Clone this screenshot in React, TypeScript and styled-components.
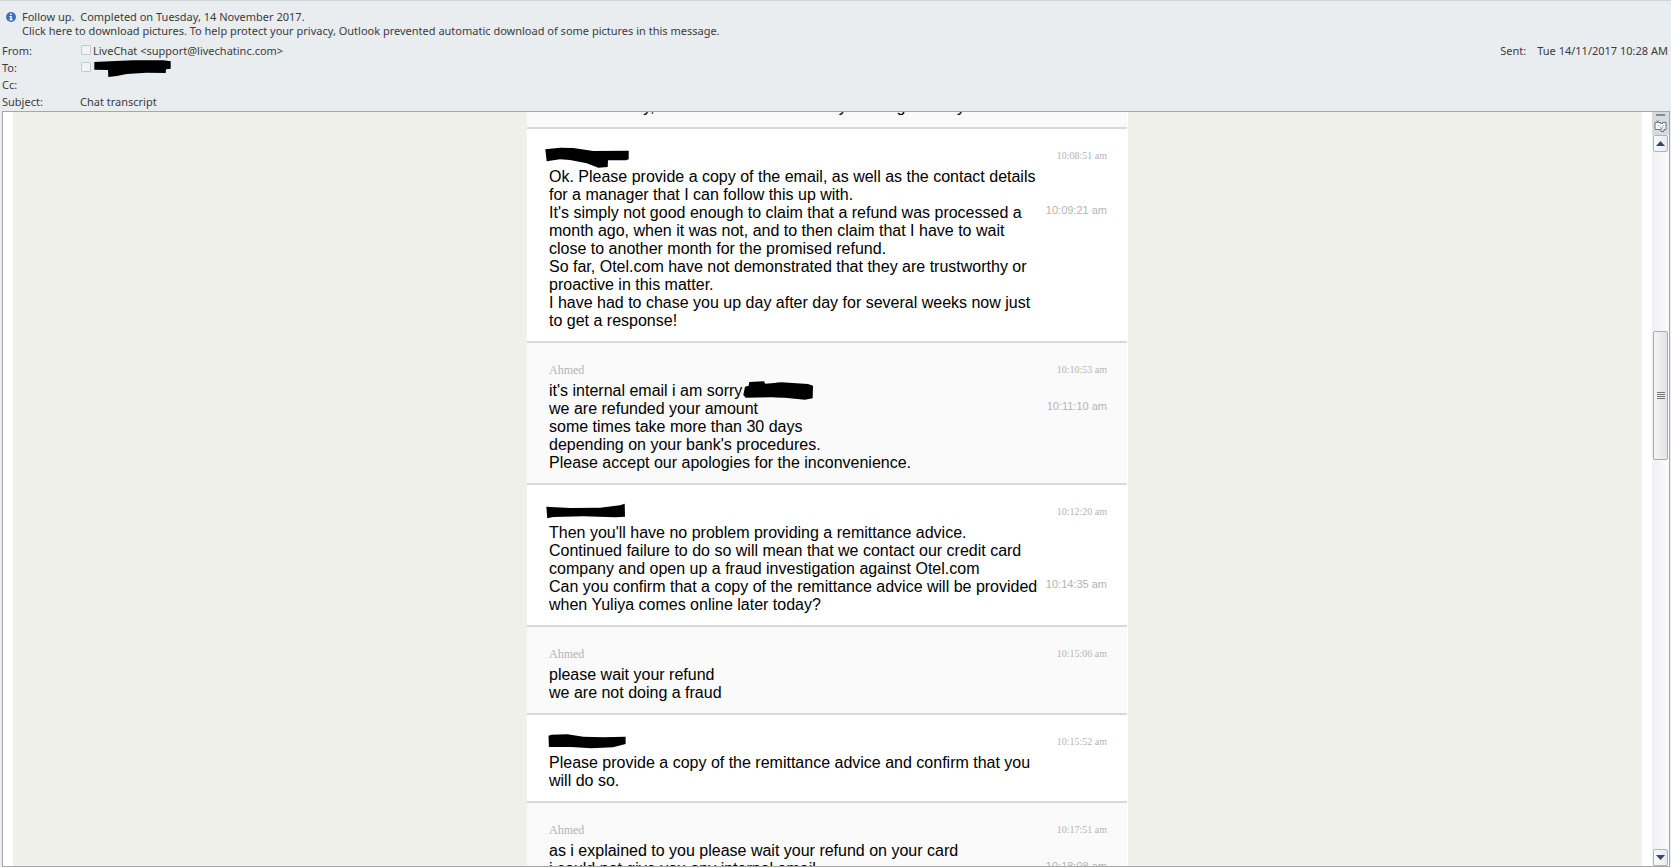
import React, { useLayoutEffect, useRef } from "react";
import styled, { createGlobalStyle } from "styled-components";

const GlobalStyle = createGlobalStyle`
  * { box-sizing: border-box; }
  body { margin: 0; background: #e9edf0; }
`;

const Window = styled.div`
  display: flex;
  flex-direction: column;
  height: 100vh;
  padding: 0 1px 0 2px;
  border-top: 1px solid #cfd4d8;
  background: #e9edf0;
  color: #3b3b3b;
  font: 11px/17px "Noto Sans", "Open Sans", sans-serif;
`;

const InfoBar = styled.div`
  display: flex;
  gap: 6px;
  padding: 9px 4px 4px;
  line-height: 14px;
`;

const InfoIcon = styled.svg`
  flex: none;
  width: 10px;
  height: 14px;
`;

const InfoLines = styled.div`
  display: flex;
  flex-direction: column;
  align-items: flex-start;
  white-space: pre;
`;

const InfoAction = styled.button`
  padding: 0;
  border: 0;
  background: none;
  color: inherit;
  font: inherit;
  cursor: pointer;
`;

const Envelope = styled.div`
  display: flex;
  align-items: flex-start;
  justify-content: space-between;
  padding-bottom: 1px;
`;

const Fields = styled.dl`
  display: grid;
  grid-template-columns: 78px auto;
  grid-auto-rows: 17px;
  margin: 0;
`;

const SentField = styled.dl`
  display: flex;
  gap: 11px;
  margin: 0;
  padding-right: 2px;
`;

const Label = styled.dt``;

const Value = styled.dd`
  display: flex;
  align-items: center;
  gap: 2px;
  margin: 0;
`;

const Presence = styled.input`
  appearance: none;
  width: 10px;
  height: 10px;
  margin: 0 0 2px 1px;
  border: 1px solid #c6c9cc;
  border-radius: 1px;
  background: #f1f2f3;
`;

const Pane = styled.main`
  display: flex;
  flex: 1;
  min-height: 0;
  border: 1px solid #a3a8ac;
  background: #fff;
`;

const Viewport = styled.div`
  flex: 1;
  margin: 0 10px;
  overflow-y: auto;
  scrollbar-width: none;
  background: #eff0ea;
`;

const Transcript = styled.div`
  width: 601px;
  max-width: 100%;
  margin: 0 auto;
  padding-right: 1px;
  background: #fff;
`;

const Turn = styled.section<{ $agent?: boolean }>`
  padding: 19px 20px 11px 22px;
  border-bottom: 2px solid #d9d9d9;
  background: ${(p) => (p.$agent ? "#fafafa" : "#fff")};
`;

const TurnHeader = styled.header`
  display: flex;
  justify-content: space-between;
  margin-bottom: 4px;
  color: #b4b4b4;
  font: 12px/16px "Liberation Serif", "Times New Roman", serif;
`;

const Author = styled.span`
  position: relative;
`;

const HeaderTime = styled.time`
  font-size: 10px;
`;

const Message = styled.div`
  display: flex;
  justify-content: space-between;
`;

const MessageText = styled.p`
  position: relative;
  width: 496px;
  margin: 0;
  color: #000;
  font: 16px/18px "Liberation Sans", Arial, sans-serif;
`;

const MessageTime = styled.time`
  color: #b4b4b4;
  font: 11px/12px "Liberation Sans", Arial, sans-serif;
  white-space: nowrap;
`;

const AuthorMark = styled.svg`
  position: absolute;
  top: -2px;
  left: -4px;
  width: 86px;
  height: 22px;
`;

const InlineMark = styled.svg`
  position: absolute;
  top: -1px;
  width: 72px;
  height: 20px;
`;

const RecipientMark = styled.svg`
  width: 78px;
  height: 18px;
`;

const ScrollBar = styled.div`
  display: flex;
  flex: none;
  flex-direction: column;
  width: 17px;
  padding: 0 1px;
  background: linear-gradient(90deg, #f0f0f3, #fbfbfc);
`;

const ScrollTools = styled.div`
  display: flex;
  flex: none;
  flex-direction: column;
  align-items: center;
  gap: 4px;
  height: 23px;
  margin: 0 -1px;
  padding-top: 2px;
  background: #d6dbdf;
`;

const SplitHandle = styled.span`
  width: 9px;
  height: 2px;
  background: #858a8d;
`;

const ToolButton = styled.button`
  display: flex;
  padding: 0;
  border: 0;
  background: none;
`;

const ArrowButton = styled.button`
  display: flex;
  flex: none;
  align-items: center;
  justify-content: center;
  height: 17px;
  padding: 0;
  border: 1px solid #b0b4bb;
  border-radius: 2px;
  background: linear-gradient(90deg, #fafafa, #e9eaec);
`;

const Track = styled.div<{ $share: number }>`
  flex: ${(p) => p.$share};
`;

const Thumb = styled.div`
  display: flex;
  flex: 127;
  flex-direction: column;
  align-items: center;
  justify-content: center;
  gap: 1px;
  border: 1px solid #a9abb0;
  border-radius: 2px;
  background: linear-gradient(90deg, #f5f5f5, #e2e3e5);
`;

const Grip = styled.span`
  width: 8px;
  height: 1px;
  background: #777;
`;

type Msg = { text: React.ReactNode; time?: string };
type TurnData = { author?: string; mark?: string; time?: string; messages: Msg[] };

const turns: TurnData[] = [
  {
    author: "Ahmed",
    messages: [{ text: "and I am sorry, as I also understand that you are genuinely" }],
  },
  {
    mark: "M.3 3.3 15 1.7 28.3 2 48.3 5 83.7 4.7V13.3L81 14.3H63L62.7 21 53.3 21.7 41.7 17.3 25 14 15 13.3 1.7 15.3Z",
    time: "10:08:51 am",
    messages: [
      { text: "Ok. Please provide a copy of the email, as well as the contact details for a manager that I can follow this up with." },
      {
        text: "It's simply not good enough to claim that a refund was processed a month ago, when it was not, and to then claim that I have to wait close to another month for the promised refund.",
        time: "10:09:21 am",
      },
      { text: "So far, Otel.com have not demonstrated that they are trustworthy or proactive in this matter." },
      { text: "I have had to chase you up day after day for several weeks now just to get a response!" },
    ],
  },
  {
    author: "Ahmed",
    time: "10:10:53 am",
    messages: [
      {
        text: (
          <>
            it's internal email i am sorry
            <InlineMark viewBox="0 0 72 20" aria-hidden="true">
              <path d="M3 5.7 6.7 4.7 7.3 1 22 .3 23.3 2.7 39.3 1.3 66 3 71 4.7 70.7 17.3 62.7 18.7 42.7 16.7 29.3 16.3 3.7 16.7 1.3 14Z" />
            </InlineMark>
          </>
        ),
      },
      { text: "we are refunded your amount", time: "10:11:10 am" },
      { text: "some times take more than 30 days" },
      { text: "depending on your bank's procedures." },
      { text: "Please accept our apologies for the inconvenience." },
    ],
  },
  {
    mark: "M1.3 4.7 25 6 55 5.7 75 3.3 79.7 1.7 80 14.7 70 15.3 38.3 14.3 8.3 15 2.3 16.3Z",
    time: "10:12:20 am",
    messages: [
      { text: "Then you'll have no problem providing a remittance advice." },
      { text: "Continued failure to do so will mean that we contact our credit card company and open up a fraud investigation against Otel.com" },
      { text: "Can you confirm that a copy of the remittance advice will be provided when Yuliya comes online later today?", time: "10:14:35 am" },
    ],
  },
  {
    author: "Ahmed",
    time: "10:15:06 am",
    messages: [{ text: "please wait your refund" }, { text: "we are not doing a fraud" }],
  },
  {
    mark: "M3.5 3.7 6.6 2.7 22.4 2.3 38.3 4.7 58 5.3 80.6 4.7V12L68 15.3 46.2 16.3 26.4 15H3.9Z",
    time: "10:15:52 am",
    messages: [{ text: "Please provide a copy of the remittance advice and confirm that you will do so." }],
  },
  {
    author: "Ahmed",
    time: "10:17:51 am",
    messages: [
      { text: "as i explained to you please wait your refund on your card" },
      { text: "i could not give you any internal email", time: "10:18:08 am" },
    ],
  },
];

export default function App() {
  const viewport = useRef<HTMLDivElement>(null);

  useLayoutEffect(() => {
    if (viewport.current) viewport.current.scrollTop = 33;
  }, []);

  return (
    <Window>
      <GlobalStyle />
      <InfoBar>
        <InfoIcon viewBox="0 0 10 14" aria-hidden="true">
          <circle cx="5" cy="7" r="5" fill="#3f6fc0" />
          <path d="M4.2 3.6h1.6v1.5H4.2zM3.5 6h2.3v3.3h.9v1H3.4v-1h.9V7h-.8z" fill="#fff" />
        </InfoIcon>
        <InfoLines>
          <span>{"Follow up.  Completed on Tuesday, 14 November 2017."}</span>
          <InfoAction type="button">
            Click here to download pictures. To help protect your privacy, Outlook prevented automatic download of some pictures in this message.
          </InfoAction>
        </InfoLines>
      </InfoBar>
      <Envelope>
        <Fields>
          <Label>From:</Label>
          <Value>
            <Presence type="checkbox" aria-label="Sender presence" />
            {"LiveChat <support@livechatinc.com>"}
          </Value>
          <Label>To:</Label>
          <Value>
            <Presence type="checkbox" aria-label="Recipient presence" />
            <RecipientMark viewBox="0 0 78 18" aria-hidden="true">
              <path d="M1.3 3 17 2.3 40.3 1.3H70.3L77.7 2.3V9.7L73 10.3 72.7 14 53.7 13.7 33.7 15 23.7 17 15.3 18 15 11 1.3 10.7Z" />
            </RecipientMark>
          </Value>
          <Label>Cc:</Label>
          <Value />
          <Label>Subject:</Label>
          <Value>Chat transcript</Value>
        </Fields>
        <SentField>
          <Label>Sent:</Label>
          <Value>Tue 14/11/2017 10:28 AM</Value>
        </SentField>
      </Envelope>
      <Pane>
        <Viewport ref={viewport}>
          <Transcript>
            {turns.map((turn, n) => (
              <Turn key={n} $agent={!!turn.author}>
                {turn.time && (
                  <TurnHeader>
                    <Author>
                      {turn.author}
                      {turn.mark && (
                        <AuthorMark viewBox="0 0 86 22" aria-hidden="true">
                          <path d={turn.mark} />
                        </AuthorMark>
                      )}
                    </Author>
                    <HeaderTime>{turn.time}</HeaderTime>
                  </TurnHeader>
                )}
                {turn.messages.map((m, i) => (
                  <Message key={i}>
                    <MessageText>{m.text}</MessageText>
                    {m.time && <MessageTime>{m.time}</MessageTime>}
                  </Message>
                ))}
              </Turn>
            ))}
          </Transcript>
        </Viewport>
        <ScrollBar>
          <ScrollTools>
            <SplitHandle />
            <ToolButton type="button" aria-label="Ruler">
              <svg width="13" height="13" viewBox="0 0 13 13" fill="#f4f5f6" stroke="#6f7478">
                <path d="M3.5 2.5h3v1h2v-1h3.5v7h-2v2h-3v-2h-6v-7z" />
                <path d="M2.5.5 5 3M5 .5 2.5 3M4.5 5.5l1 1M6.5 7.5l2 2M8.5 7.5l-2 2M9.5 5.5l-1 1" fill="none" />
              </svg>
            </ToolButton>
          </ScrollTools>
          <ArrowButton type="button" aria-label="Scroll up">
            <svg width="9" height="5" viewBox="0 0 9 5"><path d="M4.5 0 9 5H0Z" fill="#3c4270" /></svg>
          </ArrowButton>
          <Track $share={180} />
          <Thumb>
            <Grip /><Grip /><Grip /><Grip />
          </Thumb>
          <Track $share={390} />
          <ArrowButton type="button" aria-label="Scroll down">
            <svg width="9" height="5" viewBox="0 0 9 5"><path d="M0 0H9L4.5 5Z" fill="#3c4270" /></svg>
          </ArrowButton>
        </ScrollBar>
      </Pane>
    </Window>
  );
}
